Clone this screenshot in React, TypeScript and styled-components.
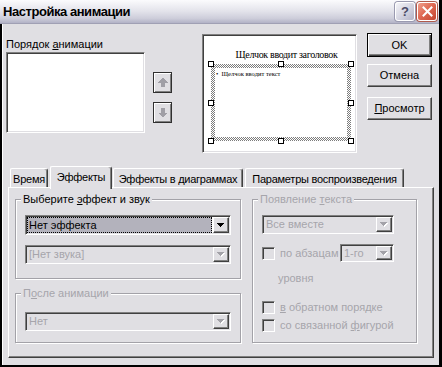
import React from "react";
import styled, { createGlobalStyle, css } from "styled-components";

const FACE = "#e0dfe3";
const DIS = "#a6a5ab";

const GlobalStyle = createGlobalStyle`
  html, body { margin: 0; padding: 0; background: #000; }
  body {
    font-family: "Liberation Sans", Arial, sans-serif;
    font-size: 11px;
    line-height: 13px;
    color: #000;
  }
  *, *::before, *::after { box-sizing: border-box; }
  button { font: inherit; color: inherit; margin: 0; }
  u { text-decoration: underline; text-underline-offset: 1px; }
`;

const sunken = css`
  border: 1px solid;
  border-color: #808080 #ffffff #ffffff #808080;
  box-shadow: inset 1px 1px 0 #404040, inset -1px -1px 0 ${FACE};
`;

const raised = css`
  border: 1px solid;
  border-color: #ffffff #404040 #404040 #ffffff;
  box-shadow: inset -1px -1px 0 #808080;
`;

const Screen = styled.div`
  width: 442px;
  height: 367px;
  background: #000;
  overflow: hidden;
`;

const Dialog = styled.div`
  width: 439px;
  height: 365px;
  background: ${FACE};
  display: flex;
  flex-direction: column;
`;

const TitleBar = styled.div`
  flex: none;
  height: 24px;
  display: flex;
  align-items: center;
  padding: 0 2px 1px 3px;
  background: linear-gradient(
    180deg,
    #fbfbfd 0%,
    #f2f2f6 18%,
    #e2e2ea 50%,
    #cdcdda 80%,
    #b2b2c6 100%
  );
  border-bottom: 1px solid #a0a0b4;
`;

const Title = styled.div`
  flex: 1;
  font-weight: bold;
  font-size: 13px;
  letter-spacing: -0.45px;
  color: #000;
  white-space: nowrap;
`;

const CapButton = styled.div<{ $close?: boolean }>`
  width: 20px;
  height: 19px;
  margin-left: ${(p) => (p.$close ? 2 : 0)}px;
  border: 1px solid #ffffff;
  border-radius: 3px;
  display: flex;
  align-items: center;
  justify-content: center;
  background: ${(p) =>
    p.$close
      ? "linear-gradient(135deg, #f0a08e 0%, #df6b55 45%, #c4452f 100%)"
      : "linear-gradient(135deg, #f4f4f8 0%, #d6d6e2 50%, #b4b4c8 100%)"};
  box-shadow: 0 0 0 1px ${(p) => (p.$close ? "#b05a4c" : "#9a9ab0")};
  color: #4b4b66;
  font-weight: bold;
  font-size: 13px;
  line-height: 13px;
`;

const Body = styled.div`
  flex: 1;
  display: flex;
  flex-direction: column;
  border-left: 2px solid #000;
  box-shadow: inset 1px 0 0 #ffffff;
  padding: 9px 0 0 4px;
`;

const TopRow = styled.div`
  display: flex;
  align-items: flex-start;
`;

const OrderCol = styled.div`
  margin-top: 5px;
  display: flex;
  flex-direction: column;
`;

const Label = styled.div<{ $off?: boolean }>`
  line-height: 13px;
  height: 13px;
  white-space: nowrap;
  color: ${(p) => (p.$off ? DIS : "#000")};
`;

const ListBox = styled.div`
  ${sunken};
  margin-top: 1px;
  width: 139px;
  height: 81px;
  background: #ffffff;
`;

const ArrowCol = styled.div`
  margin: 39px 0 0 8px;
  display: flex;
  flex-direction: column;
  gap: 9px;
`;

const ArrowButton = styled.button`
  width: 19px;
  height: 21px;
  padding: 0;
  background: ${FACE};
  border: 1px solid #303030;
  box-shadow: inset 1px 1px 0 #ffffff, inset -1px -1px 0 #808080;
  display: flex;
  align-items: center;
  justify-content: center;
`;

const Preview = styled.div`
  ${sunken};
  margin: 1px 0 0 30px;
  width: 155px;
  height: 119px;
  background: #ffffff;
  padding: 14px 0 0 8px;
  display: flex;
  flex-direction: column;
  align-items: flex-start;
`;

const SlideTitle = styled.div`
  align-self: center;
  margin-left: 6px;
  font-family: "Liberation Serif", "Times New Roman", serif;
  font-size: 10px;
  line-height: 11px;
  letter-spacing: -0.35px;
  color: #000;
  white-space: nowrap;
`;

const SlideFrame = styled.div`
  position: relative;
  margin-top: 4px;
  width: 140px;
  height: 77px;
  padding: 4px;
  background: repeating-conic-gradient(#7c7c7c 0% 25%, #ffffff 0% 50%) 0 0 /
    2px 2px;
`;

const SlideInner = styled.div`
  width: 100%;
  height: 100%;
  background: #ffffff;
  padding: 2px 0 0 1px;
  font-family: "Liberation Serif", "Times New Roman", serif;
  font-size: 6.5px;
  line-height: 8px;
  white-space: nowrap;
  color: #000;
`;

const Handle = styled.span<{ $x: string; $y: string }>`
  position: absolute;
  left: ${(p) => p.$x};
  top: ${(p) => p.$y};
  width: 6px;
  height: 6px;
  margin: -3px 0 0 -3px;
  background: #ffffff;
  border: 1px solid #000;
`;

const ButtonCol = styled.div`
  margin-left: 10px;
  display: flex;
  flex-direction: column;
`;

const DlgButton = styled.button<{ $default?: boolean; $mt: number }>`
  width: 65px;
  height: ${(p) => (p.$default ? 24 : 23)}px;
  margin-top: ${(p) => p.$mt}px;
  padding: 0;
  background: ${FACE};
  ${(p) =>
    p.$default
      ? css`
          border: 1px solid #000;
          box-shadow: inset 1px 1px 0 #ffffff, inset -1px -1px 0 #404040,
            inset -2px -2px 0 #808080;
        `
      : raised};
  line-height: 13px;
  text-align: center;
`;

const TabRow = styled.div`
  margin: 13px 0 0 2px;
  padding-left: 2px;
  height: 21px;
  display: flex;
  align-items: flex-end;
`;

const Tab = styled.div<{ $w: number; $ml: number; $active?: boolean }>`
  width: ${(p) => p.$w}px;
  margin-left: ${(p) => p.$ml}px;
  height: ${(p) => (p.$active ? 23 : 19)}px;
  margin-bottom: ${(p) => (p.$active ? -2 : 0)}px;
  ${(p) =>
    p.$active &&
    css`
      position: relative;
      z-index: 1;
    `}
  padding-top: 4px;
  background: ${FACE};
  border-top: 1px solid #ffffff;
  border-left: 1px solid #ffffff;
  border-right: 1px solid #404040;
  border-radius: 2px 3px 0 0;
  box-shadow: inset -1px 0 0 #808080;
  text-align: center;
  white-space: nowrap;
  letter-spacing: -0.25px;
  line-height: 13px;
`;

const Panel = styled.div`
  margin-left: 2px;
  width: 426px;
  height: 171px;
  background: ${FACE};
  border: 1px solid;
  border-color: #ffffff #404040 #404040 #ffffff;
  box-shadow: inset -1px -1px 0 #808080;
  padding: 5px 0 0 6px;
  display: flex;
  gap: 11px;
`;

const Column = styled.div<{ $w: number }>`
  width: ${(p) => p.$w}px;
  display: flex;
  flex-direction: column;
`;

const Group = styled.div<{ $h: number; $mt: number }>`
  margin-top: ${(p) => p.$mt}px;
  height: ${(p) => p.$h}px;
  border: 1px solid #a3a2a8;
  box-shadow: inset 1px 1px 0 #ffffff, 1px 1px 0 #ffffff;
  padding: 0 9px;
  display: flex;
  flex-direction: column;
  align-items: flex-start;
`;

const Legend = styled.div<{ $off?: boolean }>`
  margin: -7px 0 0 -4px;
  padding: 0 2px;
  height: 13px;
  line-height: 13px;
  background: ${FACE};
  white-space: nowrap;
  color: ${(p) => (p.$off ? DIS : "#000")};
`;

const Combo = styled.div<{ $w?: number; $h?: number; $mt: number; $off?: boolean; $ml?: string }>`
  ${sunken};
  flex: none;
  width: ${(p) => (p.$w ? `${p.$w}px` : "100%")};
  height: ${(p) => p.$h ?? 20}px;
  margin-top: ${(p) => p.$mt}px;
  margin-left: ${(p) => p.$ml ?? "0"};
  padding: 1px;
  display: flex;
  background: ${(p) => (p.$off ? FACE : "#ffffff")};
`;

const ComboText = styled.div<{ $off?: boolean; $sel?: boolean }>`
  flex: 1;
  min-width: 0;
  display: flex;
  align-items: center;
  padding-left: 2px;
  white-space: nowrap;
  overflow: hidden;
  color: ${(p) => (p.$off ? DIS : "#000")};
  ${(p) =>
    p.$sel &&
    css`
      margin: 0 1px 0 0;
      padding-left: 2px;
      background: #b3b2bc;
      outline: 1px dotted #000;
      outline-offset: -1px;
    `}
`;

const DropButton = styled.div`
  flex: none;
  width: 16px;
  ${raised};
  background: ${FACE};
  display: flex;
  align-items: center;
  justify-content: center;
`;

const CheckRow = styled.div<{ $mt: number }>`
  margin-top: ${(p) => p.$mt}px;
  width: 100%;
  display: flex;
  align-items: center;
  color: ${DIS};
  white-space: nowrap;
`;

const Check = styled.span`
  ${sunken};
  flex: none;
  width: 13px;
  height: 13px;
  margin-right: 5px;
  background: ${FACE};
`;

const ParaRow = styled.div`
  margin-top: 10px;
  width: 132px;
  height: 18px;
  display: flex;
  align-items: center;
  color: ${DIS};
  white-space: nowrap;
`;

const SubLabel = styled.div`
  margin-top: 10px;
  padding-left: 16px;
  height: 13px;
  line-height: 13px;
  color: ${DIS};
`;

const DownTri = ({ off }: { off?: boolean }) => (
  <svg width="8" height="5" viewBox="0 0 8 5" shapeRendering="crispEdges">
    {off && (
      <g fill="#ffffff">
        <rect x="1" y="1" width="7" height="1" />
        <rect x="2" y="2" width="5" height="1" />
        <rect x="3" y="3" width="3" height="1" />
        <rect x="4" y="4" width="1" height="1" />
      </g>
    )}
    <g fill={off ? "#a3a2a8" : "#000"}>
      <rect x="0" y="0" width="7" height="1" />
      <rect x="1" y="1" width="5" height="1" />
      <rect x="2" y="2" width="3" height="1" />
      <rect x="3" y="3" width="1" height="1" />
    </g>
  </svg>
);

const BlockArrow = ({ down }: { down?: boolean }) => (
  <svg
    width="11"
    height="11"
    viewBox="0 0 11 11"
    shapeRendering="crispEdges"
    style={down ? { transform: "rotate(180deg)" } : undefined}
  >
    <polygon points="5.5,0.5 10.5,5.5 7.5,5.5 7.5,10 3.5,10 3.5,5.5 0.5,5.5" fill="#a09fa6" />
  </svg>
);

const CloseGlyph = () => (
  <svg width="11" height="11" viewBox="0 0 11 11">
    <path d="M1.5 1.5 L9.5 9.5 M9.5 1.5 L1.5 9.5" stroke="#ffffff" strokeWidth="2" strokeLinecap="square" />
  </svg>
);

type ComboProps = {
  text: string;
  w?: number;
  h?: number;
  mt: number;
  ml?: string;
  off?: boolean;
  sel?: boolean;
};

const ComboBox = ({ text, w, h, mt, ml, off, sel }: ComboProps) => (
  <Combo $w={w} $h={h} $mt={mt} $ml={ml} $off={off}>
    <ComboText $off={off} $sel={sel}>
      {text}
    </ComboText>
    <DropButton>
      <DownTri off={off} />
    </DropButton>
  </Combo>
);

export default function App() {
  return (
    <Screen>
      <GlobalStyle />
      <Dialog>
        <TitleBar>
          <Title>Настройка анимации</Title>
          <CapButton>?</CapButton>
          <CapButton $close>
            <CloseGlyph />
          </CapButton>
        </TitleBar>
        <Body>
          <TopRow>
            <OrderCol>
              <Label>
                Порядок <u>а</u>нимации
              </Label>
              <ListBox />
            </OrderCol>
            <ArrowCol>
              <ArrowButton aria-label="Вверх">
                <BlockArrow />
              </ArrowButton>
              <ArrowButton aria-label="Вниз">
                <BlockArrow down />
              </ArrowButton>
            </ArrowCol>
            <Preview>
              <SlideTitle>Щелчок вводит заголовок</SlideTitle>
              <SlideFrame>
                <SlideInner>•&nbsp; Щелчок вводит текст</SlideInner>
                <Handle $x="0%" $y="0%" />
                <Handle $x="50%" $y="0%" />
                <Handle $x="100%" $y="0%" />
                <Handle $x="0%" $y="50%" />
                <Handle $x="100%" $y="50%" />
                <Handle $x="0%" $y="100%" />
                <Handle $x="50%" $y="100%" />
                <Handle $x="100%" $y="100%" />
              </SlideFrame>
            </Preview>
            <ButtonCol>
              <DlgButton $default $mt={0}>
                OK
              </DlgButton>
              <DlgButton $mt={7}>Отмена</DlgButton>
              <DlgButton $mt={10}>
                <u>П</u>росмотр
              </DlgButton>
            </ButtonCol>
          </TopRow>

          <TabRow>
            <Tab $w={38} $ml={0}>
              Время
            </Tab>
            <Tab $w={62} $ml={2} $active>
              Эффекты
            </Tab>
            <Tab $w={130} $ml={1}>
              Эффекты в диаграммах
            </Tab>
            <Tab $w={159} $ml={2}>
              Параметры воспроизведения
            </Tab>
          </TabRow>
          <Panel>
            <Column $w={226}>
              <Group $mt={6} $h={80}>
                <Legend>
                  Выберите <u>э</u>ффект и звук
                </Legend>
                <ComboBox text="Нет эффекта" mt={9} h={20} sel />
                <ComboBox text="[Нет звука]" mt={10} h={19} off />
              </Group>
              <Group $mt={14} $h={50}>
                <Legend $off>
                  П<u>о</u>сле анимации
                </Legend>
                <ComboBox text="Нет" mt={12} h={19} off />
              </Group>
            </Column>
            <Column $w={165}>
              <Group $mt={6} $h={144}>
                <Legend $off>
                  Появление <u>т</u>екста
                </Legend>
                <ComboBox text="Все вместе" mt={9} w={132} h={19} off />
                <ParaRow>
                  <Check />
                  по абзацам
                  <ComboBox text="1-го" mt={0} w={54} h={18} ml="auto" off />
                </ParaRow>
                <SubLabel>уровня</SubLabel>
                <CheckRow $mt={16}>
                  <Check />
                  <span>
                    <u>в</u> обратном порядке
                  </span>
                </CheckRow>
                <CheckRow $mt={5}>
                  <Check />
                  <span>
                    со связанной <u>ф</u>игурой
                  </span>
                </CheckRow>
              </Group>
            </Column>
          </Panel>
        </Body>
      </Dialog>
    </Screen>
  );
}
